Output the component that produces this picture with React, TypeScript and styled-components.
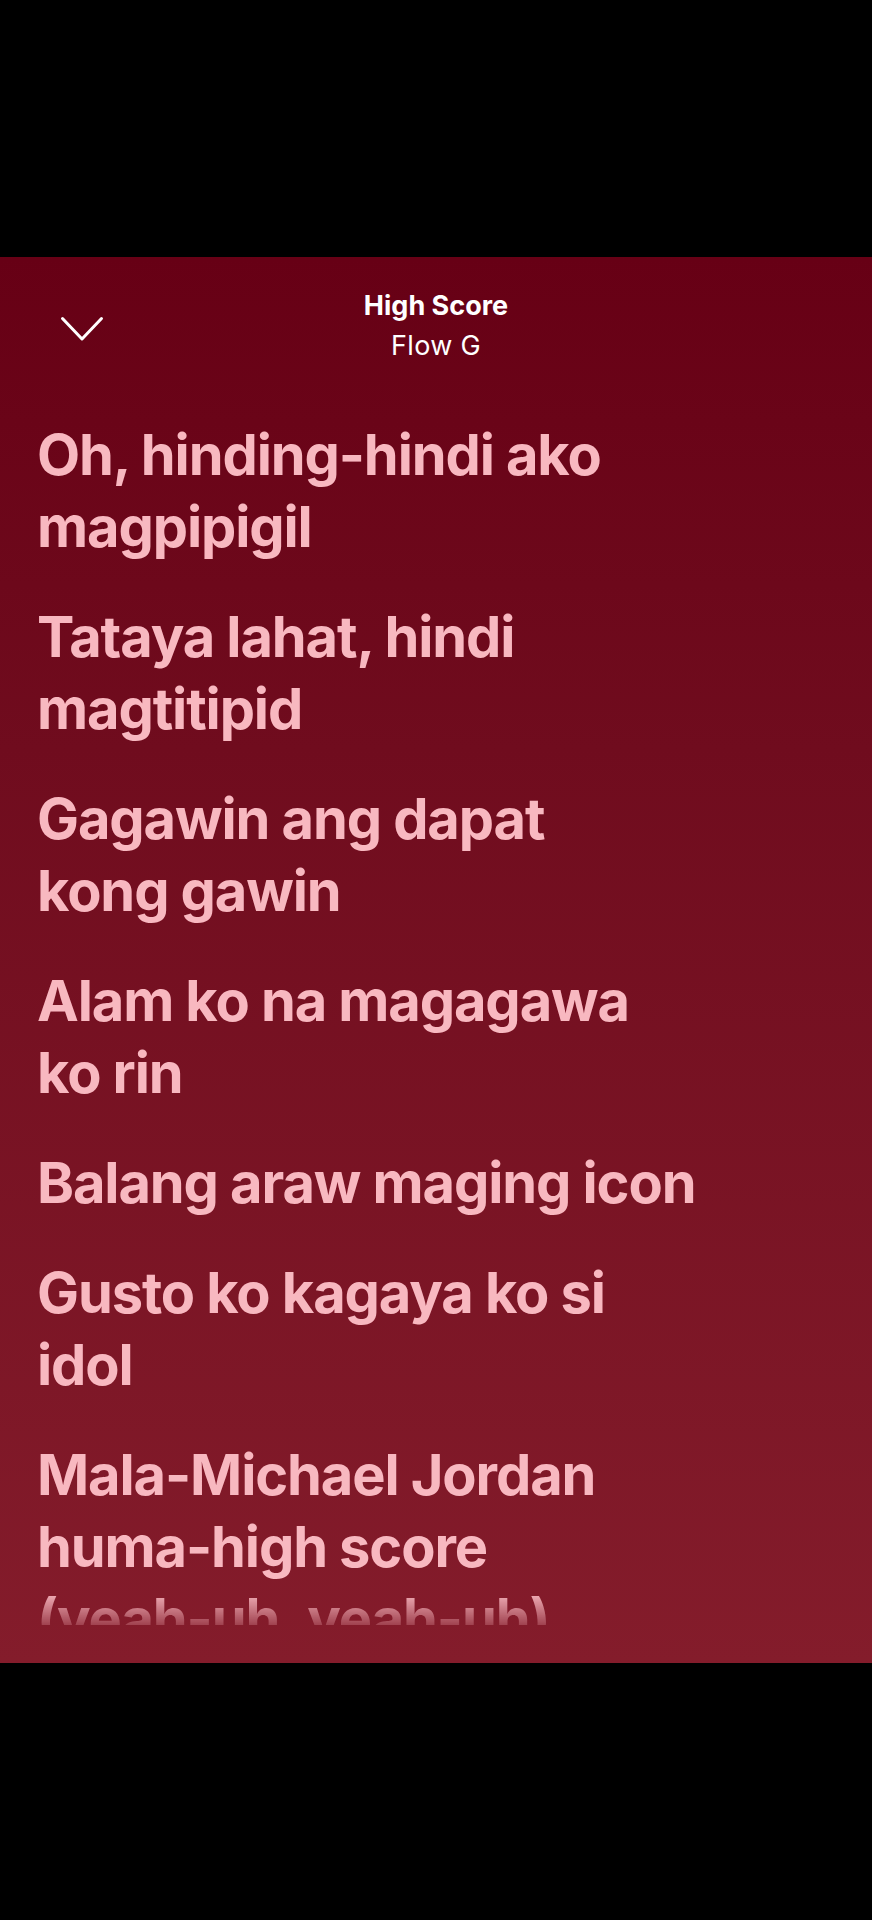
import styled, { createGlobalStyle } from "styled-components";

const GlobalStyle = createGlobalStyle`
  html, body {
    margin: 0;
    padding: 0;
    background: #000;
  }
  * {
    box-sizing: border-box;
  }
`;

const lyrics: string[] = [
  "Oh, hinding-hindi ako\nmagpipigil",
  "Tataya lahat, hindi\nmagtitipid",
  "Gagawin ang dapat\nkong gawin",
  "Alam ko na magagawa\nko rin",
  "Balang araw maging icon",
  "Gusto ko kagaya ko si\nidol",
  "Mala-Michael Jordan\nhuma-high score\n(yeah-uh, yeah-uh)",
  "Walang makakapigil",
];

const Page = styled.div`
  width: 872px;
  height: 1920px;
  padding: 257px 0;
  background: #000;
`;

const Panel = styled.div`
  height: 1406px;
  display: flex;
  flex-direction: column;
  overflow: hidden;
  background: linear-gradient(180deg, #670015 0%, #700c1e 35%, #841c2b 100%);
`;

const Header = styled.header`
  display: grid;
  grid-template-columns: 1fr auto 1fr;
  align-items: center;
  padding-top: 29px;
`;

const CloseButton = styled.button`
  justify-self: start;
  margin: 6px 0 0 59px;
  padding: 0;
  border: none;
  background: none;
  width: 46px;
  height: 28px;
  display: flex;
  align-items: center;
  justify-content: center;
  color: #fff;
`;

const TitleBlock = styled.div`
  display: flex;
  flex-direction: column;
  align-items: center;
  font-family: Inter, "Liberation Sans", sans-serif;
  font-size: 27px;
  line-height: 40px;
  color: #fff;
`;

const SongTitle = styled.div`
  font-weight: 700;
  letter-spacing: 0;
`;

const ArtistName = styled.div`
  font-weight: 400;
  letter-spacing: 0.3px;
`;

const LyricsView = styled.div`
  flex: 1;
  margin-bottom: 38px;
  padding: 53px 37px 0;
  display: flex;
  flex-direction: column;
  gap: 38px;
  overflow: hidden;
  -webkit-mask-image: linear-gradient(180deg, #000 calc(100% - 34px), rgba(0, 0, 0, 0.25) 100%);
  mask-image: linear-gradient(180deg, #000 calc(100% - 34px), rgba(0, 0, 0, 0.25) 100%);
`;

const LyricLine = styled.p`
  margin: 0;
  white-space: pre-line;
  font-family: Inter, "Liberation Sans", sans-serif;
  font-weight: 700;
  font-size: 56px;
  line-height: 72px;
  letter-spacing: -1.1px;
  color: #f8b8c0;
`;

const ChevronDown = () => (
  <svg width="44" height="26" viewBox="0 0 44 26" fill="none">
    <path
      d="M2.5 2.5 L22 23 L41.5 2.5"
      stroke="currentColor"
      strokeWidth="3"
      strokeLinecap="round"
      strokeLinejoin="round"
    />
  </svg>
);

export default function App() {
  return (
    <>
      <GlobalStyle />
      <Page>
        <Panel>
          <Header>
            <CloseButton aria-label="Close">
              <ChevronDown />
            </CloseButton>
            <TitleBlock>
              <SongTitle>High Score</SongTitle>
              <ArtistName>Flow G</ArtistName>
            </TitleBlock>
            <div />
          </Header>
          <LyricsView>
            {lyrics.map((line, i) => (
              <LyricLine key={i}>{line}</LyricLine>
            ))}
          </LyricsView>
        </Panel>
      </Page>
    </>
  );
}
